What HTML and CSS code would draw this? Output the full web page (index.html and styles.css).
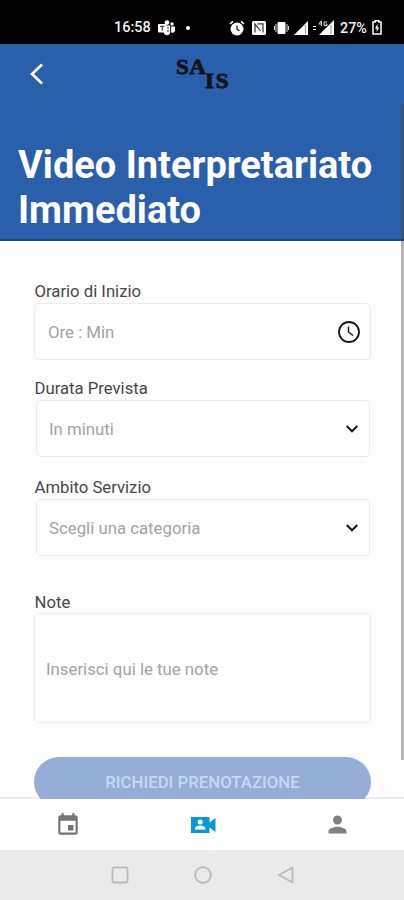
FILE: index.html
```html
<!DOCTYPE html>
<html lang="it">
<head>
<meta charset="utf-8">
<title>Video Interpretariato Immediato</title>
<link rel="stylesheet" href="styles.css">
</head>
<body>
<div class="phone">
  <div class="status">
    <span class="time">16:58</span>
    <svg class="teams" width="17" height="16" viewBox="0 0 17 16"><g fill="#fff"><circle cx="9" cy="2.6" r="2.4"/><circle cx="14" cy="4" r="1.7"/><path d="M6 5.500h6.500v6a3.500 3.500 0 0 1-6.500 2zM13 6.500h4v4a2.500 2.500 0 0 1-4 1.800z"/><rect y="4" width="8.500" height="8.500" rx="1"/></g><path d="M2 6.300h4.500M4.250 6.300v4.500M9 8h2M9 11h2M12.700 5v8" stroke="#222" fill="none"/></svg>
    <span class="dot"></span>
    <div class="tray">
      <svg width="16" height="16" viewBox="0 0 16 16"><circle cx="8" cy="9" r="6.500" fill="#fff"/><path d="M1 4l3-2.700M15 4l-3-2.700" stroke="#fff" stroke-width="1.600"/><path d="M8 5.500V9.300l2.500 1.500" stroke="#111" stroke-width="1.200" fill="none"/></svg>
      <svg class="nfc" width="14" height="14" viewBox="0 0 14 14"><rect width="14" height="14" rx="1.500" fill="#fff"/><path d="M3 11.500V3l5.500 7M5.500 2.800H11v8.700" stroke="#333" stroke-width="1.200" fill="none"/></svg>
      <svg class="vibrate" width="15" height="14" viewBox="0 0 15 14"><rect x="3.500" y="1" width="8" height="12" rx="1" fill="#fff"/><path d="M2 3v8M13 3v8M.5 5v4M14.500 5v4" stroke="#ddd"/></svg>
      <svg class="signal" width="14" height="14" viewBox="0 0 14 14"><path d="M0 14 14 0v14z" fill="#fff"/><path d="M11.500 4v9" stroke="#999"/></svg>
      <svg class="signal2" width="23" height="15" viewBox="0 0 23 15"><path d="M7 15 22 0v15z" fill="#fff"/><path d="M19 5v9" stroke="#888"/><path d="M1 6.500h3M1 9.500h3" stroke="#fff" stroke-width="1.200"/><path d="M9 1 7 4h3M9.500 1v5M15 2h-3v3.500h3V4h-1.500" stroke="#ddd" fill="none"/></svg>
      <span class="percent">27%</span>
      <svg class="battery" width="10" height="15" viewBox="0 0 10 15"><path d="M3.200 2V.8h3.600V2H9v12H1V2z" fill="none" stroke="#fff" stroke-width="1.500"/><path d="M5.500 4 3 8.500h1.700V12L7.200 7.500H5.500z" fill="#fff"/></svg>
    </div>
  </div>

  <header class="header">
    <div class="topbar">
      <svg class="back" width="16" height="22" viewBox="0 0 16 22"><path d="M15 1.500 5 11l10 9.500" fill="none" stroke="#fff" stroke-width="2.600"/></svg>
      <div class="logo"><span class="logo-top">SA</span><span class="logo-low">IS</span><span class="logo-dot"></span></div>
    </div>
    <h1>Video Interpretariato<br>Immediato</h1>
  </header>

  <main class="form">
    <label class="label">Orario di Inizio</label>
    <div class="field wide"><span>Ore : Min</span>
      <svg class="clock" width="24" height="24" viewBox="0 0 24 24" fill="none" stroke="#171717"><circle cx="12" cy="12" r="10" stroke-width="1.800"/><path d="M11.500 6.500V12l4.500 3.500" stroke-width="1.500"/></svg>
    </div>
    <label class="label second">Durata Prevista</label>
    <div class="field select"><span>In minuti</span>
      <svg class="chevron" width="14" height="10" viewBox="0 0 14 10"><path d="M1.700 2 7 7.300 12.300 2" fill="none" stroke="#171717" stroke-width="2"/></svg>
    </div>
    <label class="label third">Ambito Servizio</label>
    <div class="field select"><span>Scegli una categoria</span>
      <svg class="chevron" width="14" height="10" viewBox="0 0 14 10"><path d="M1.700 2 7 7.300 12.300 2" fill="none" stroke="#171717" stroke-width="2"/></svg>
    </div>
    <label class="label fourth">Note</label>
    <div class="field wide notes"><span>Inserisci qui le tue note</span></div>
    <div class="button"><span>RICHIEDI PRENOTAZIONE</span></div>
  </main>

  <nav class="tabs">
    <div><svg width="26" height="26" viewBox="0 0 24 24" fill="#757575"><path d="M17 12h-5v5h5v-5zM16 1v2H8V1H6v2H5c-1.110 0-1.990.9-1.990 2L3 19c0 1.100.89 2 2 2h14c1.100 0 2-.9 2-2V5c0-1.100-.9-2-2-2h-1V1h-2zm3 18H5V8h14v11z"/></svg></div>
    <div><svg width="27" height="20" viewBox="0 0 27 20"><path d="M1 2h18.500v5.500L25.500 3v14l-6-4.500V18H1z" fill="#0b98d8"/><circle cx="10.200" cy="7" r="2.500" fill="#fff"/><path d="M5 14.500v-1c0-2 3-3 5.200-3s5.200 1 5.200 3v1z" fill="#fff"/></svg></div>
    <div><svg width="27" height="27" viewBox="0 0 24 24" fill="#808080"><path d="M12 12c2.210 0 4-1.790 4-4s-1.790-4-4-4-4 1.790-4 4 1.790 4 4 4zm0 2c-2.670 0-8 1.340-8 4v2h16v-2c0-2.660-5.330-4-8-4z"/></svg></div>
  </nav>

  <div class="system">
    <svg width="18" height="18" viewBox="0 0 18 18"><rect x="1.500" y="1.500" width="15" height="15" rx="1.500"/></svg>
    <svg width="18" height="18" viewBox="0 0 18 18"><circle cx="9" cy="9" r="7.800"/></svg>
    <svg width="18" height="18" viewBox="0 0 18 18"><path d="M15.500 1.500v15L2 9z" stroke-linejoin="round"/></svg>
  </div>
  <div class="scrollbar"></div>
</div>
</body>
</html>
```
FILE: styles.css
```css
* { box-sizing: border-box; }
body { margin: 0; font-family: Roboto, "Liberation Sans", sans-serif; }
.phone { position: relative; width: 404px; height: 900px; display: flex; flex-direction: column; overflow: hidden; background: #fdfdfd; }

.status { flex: none; height: 44px; background: #000; color: #f2f2f2; display: flex; align-items: center; padding: 11px 22px 0 114px; font-size: 14.5px; font-weight: 500; line-height: 18px; }
.time { width: 37px; white-space: nowrap; }
.teams { margin-left: 7px; }
.dot { width: 4px; height: 4px; border-radius: 50%; background: #fff; margin-left: 11px; }
.tray { margin-left: auto; display: flex; align-items: center; }
.nfc { margin-left: 7px; }
.vibrate { margin-left: 8px; }
.signal { margin-left: 5px; }
.signal2 { margin-left: 4px; }
.percent { margin-left: 5px; width: 28px; white-space: nowrap; font-size: 14.3px; }
.battery { margin-left: 4px; }

.header { flex: none; height: 197px; background: #295fab; border-bottom: 2px solid #164583; }
.topbar { height: 60px; display: flex; align-items: center; padding-left: 27px; }
.logo { position: relative; width: 56px; height: 36px; margin-left: 132px; color: #10141c; font-family: "Liberation Serif", serif; font-weight: 700; font-size: 20px; line-height: 20px; }
.logo-top, .logo-low { position: absolute; transform: scaleX(1.15); transform-origin: left; -webkit-text-stroke: .8px #10141c; }
.logo-top { left: 1px; top: 1px; letter-spacing: .5px; }
.logo-low { left: 30px; top: 15px; letter-spacing: 1.5px; }
.logo-dot { position: absolute; left: 29px; top: 18px; width: 2px; height: 2px; background: #b52649; }
h1 { margin: 39px 0 0 18px; color: #fff; font-size: 38px; line-height: 45px; font-weight: 700; white-space: nowrap; }

.form { flex: 1 1 0; min-height: 0; overflow: hidden; padding: 40px 33px 0 34px; display: flex; flex-direction: column; background: linear-gradient(#ededed, #ededed) bottom / 100% 2px no-repeat; }
.label { flex: none; height: 22px; line-height: 22px; padding-left: .5px; font-size: 16.7px; color: #484848; white-space: nowrap; }
.second { margin-top: 18px; }
.third { margin-top: 20px; }
.fourth { margin-top: 36px; }
.field { flex: none; height: 57px; margin: 0 1px 0 2px; padding: 0 10px 0 12px; border: 1px solid #ebebeb; border-radius: 5px; display: flex; align-items: center; justify-content: space-between; font-size: 16.8px; color: #a3a3a3; background: #fefefe; white-space: nowrap; }
.wide { margin: 0; padding: 0 9px 0 13px; }
.select { padding-top: 1px; }
.notes { height: 110px; margin-top: -1px; padding: 2px 11px 0; }
.button { flex: none; height: 50px; margin-top: 34px; padding-bottom: 1px; border-radius: 25px; background: #94aed7; color: #c3d8f3; display: flex; align-items: center; justify-content: center; font-size: 16.8px; font-weight: 500; white-space: nowrap; }

.tabs { flex: none; height: 51px; padding-left: 1px; margin-right: -1px; background: #fff; display: flex; align-items: center; }
.tabs div { flex: 1; display: flex; justify-content: center; }
.tabs svg { display: block; }
.system { flex: none; height: 50px; padding-left: 2px; background: #eaeaea; display: flex; align-items: center; justify-content: center; gap: 65px; }
.system svg { fill: none; stroke: #bababa; stroke-width: 1.8; }
.scrollbar { position: absolute; right: 0; top: 104px; width: 3px; height: 656px; background: rgba(70, 70, 70, .4); }
```
